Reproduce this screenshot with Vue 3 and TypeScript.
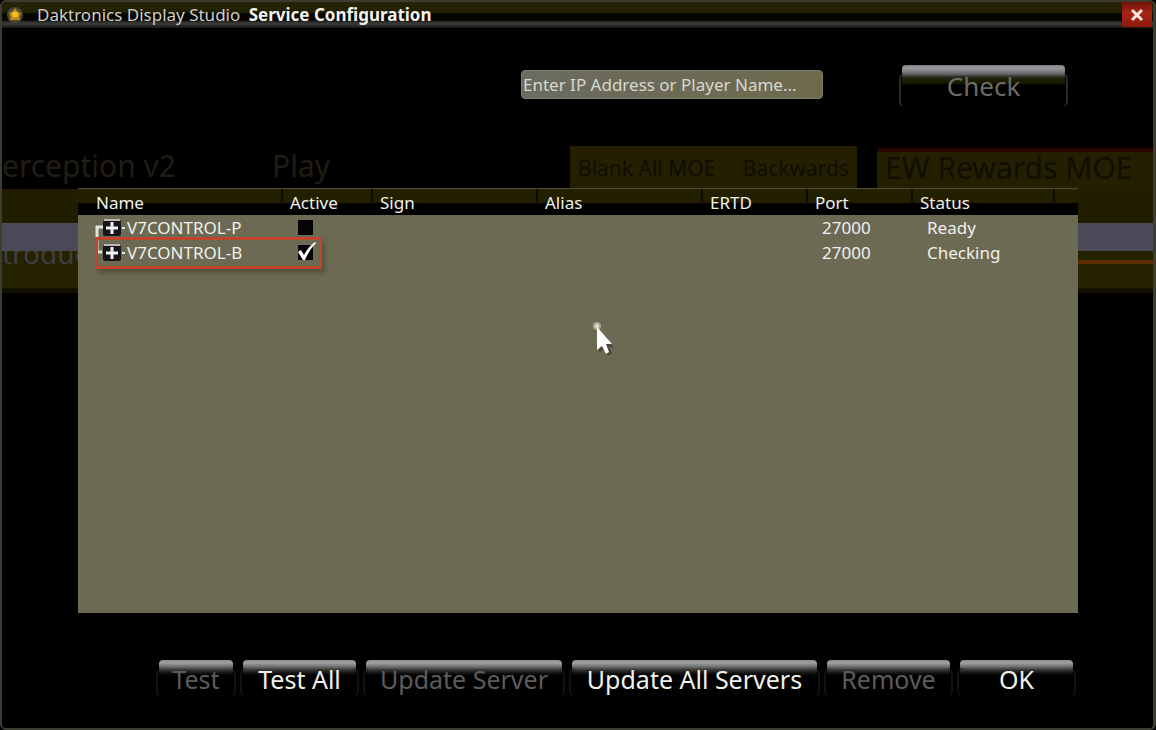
<script setup lang="ts">
import { ref } from 'vue'

interface Server {
  name: string
  active: boolean
  sign: string
  alias: string
  ertd: string
  port: number
  status: string
}

interface Action {
  label: string
  enabled: boolean
  size: string
}

const address = ref('')

const columns = ['Name', 'Active', 'Sign', 'Alias', 'ERTD', 'Port', 'Status', '']

const servers = ref<Server[]>([
  { name: 'V7CONTROL-P', active: false, sign: '', alias: '', ertd: '', port: 27000, status: 'Ready' },
  { name: 'V7CONTROL-B', active: true, sign: '', alias: '', ertd: '', port: 27000, status: 'Checking' },
])

const actions: Action[] = [
  { label: 'Test', enabled: false, size: 'xs' },
  { label: 'Test All', enabled: true, size: 'sm' },
  { label: 'Update Server', enabled: false, size: 'lg' },
  { label: 'Update All Servers', enabled: true, size: 'xl' },
  { label: 'Remove', enabled: false, size: 'md' },
  { label: 'OK', enabled: true, size: 'sm' },
]
</script>

<template>
  <main class="window">
    <div class="backdrop" aria-hidden="true">
      <span class="ghost ghost-title">erception v2</span>
      <span class="ghost ghost-play">Play</span>
      <span class="tab tab-blank"><span>Blank All MOE</span><span>Backwards</span></span>
      <span class="tab tab-rewards">EW Rewards MOE</span>
      <div class="band">
        <div class="band-top"></div>
        <div class="band-mid"></div>
        <div class="band-low"><span>troduc</span></div>
      </div>
      <i class="edge edge-a"></i>
      <i class="edge edge-b"></i>
      <i class="edge edge-c"></i>
    </div>

    <header class="titlebar">
      <svg class="logo" viewBox="0 0 18 18" aria-hidden="true">
        <circle cx="9" cy="9" r="8" fill="#4a4638" />
        <path d="M9 2 11.5 5.5 15 7 13.5 10.5 14 14H4L4.5 10.5 3 7 6.500 5.500Z" fill="#b98a10" />
        <circle cx="9" cy="8.500" r="3" fill="#f5bd28" />
      </svg>
      <h1><span>Daktronics Display Studio</span> <b>Service Configuration</b></h1>
      <button class="close" type="button" aria-label="Close">
        <svg viewBox="0 0 14 14"><path d="M2 2 12 12M12 2 2 12" stroke="#ffe9dc" stroke-width="3" /></svg>
      </button>
    </header>

    <form class="lookup" @submit.prevent>
      <input v-model="address" type="text" aria-label="IP address or player name" placeholder="Enter IP Address or Player Name..." />
      <button class="glass check" type="submit" disabled>Check</button>
    </form>

    <section class="panel">
      <table>
        <colgroup>
          <col class="c-name" /><col class="c-active" /><col class="c-wide" /><col class="c-wide" />
          <col class="c-mid" /><col class="c-mid" /><col class="c-status" /><col />
        </colgroup>
        <thead>
          <tr><th v-for="(c, i) in columns" :key="i" scope="col">{{ c }}</th></tr>
        </thead>
        <tbody>
          <tr v-for="(s, i) in servers" :key="s.name">
            <td>
              <div class="node">
                <svg class="tree" viewBox="0 0 33 25" aria-hidden="true">
                  <path v-if="i === 0" d="M9 12H3V25" fill="none" stroke="#e4e4e0" stroke-width="3" />
                  <path v-else d="M3 0V12H8" fill="none" stroke="#e4e4e0" stroke-width="3" />
                  <rect x="9" y="5" width="18" height="16" rx="2" fill="#17171a" />
                  <path d="M10 5H26" stroke="#b9b9b9" stroke-width="2" />
                  <path d="M12 13H24M18 7V19" stroke="#f2f2f2" stroke-width="3" />
                  <path d="M28 13H31" stroke="#e4e4e0" stroke-width="2" />
                </svg>
                <span>{{ s.name }}</span>
              </div>
            </td>
            <td>
              <label class="tick">
                <input v-model="s.active" type="checkbox" :aria-label="`${s.name} active`" />
                <svg v-if="s.active" viewBox="0 0 20 20" aria-hidden="true">
                  <path d="M1 10 4 8 7 13Q11 5 18 0L19 1Q12 8 8 18H6Z" fill="#fff" />
                </svg>
              </label>
            </td>
            <td>{{ s.sign }}</td>
            <td>{{ s.alias }}</td>
            <td>{{ s.ertd }}</td>
            <td class="inset">{{ s.port }}</td>
            <td class="inset">{{ s.status }}</td>
            <td></td>
          </tr>
        </tbody>
      </table>
      <div class="marker"></div>
      <svg class="pointer" viewBox="0 0 24 34" aria-hidden="true">
        <path d="M7 8V31L12 27 16 34 20 31 17 25H22Z" fill="#35332a" opacity=".6" />
        <circle cx="5" cy="4" r="4" fill="#aaa995" />
        <circle cx="5" cy="4" r="2" fill="#dddccf" />
        <path d="M5 5V28L10 24 14 32 17 30 14 22H20Z" fill="#fff" />
      </svg>
    </section>

    <footer class="actions">
      <button v-for="a in actions" :key="a.label" type="button" class="glass" :class="a.size" :disabled="!a.enabled">
        {{ a.label }}
      </button>
    </footer>
  </main>
</template>

<style>
body {
  margin: 0;
  background: #000;
}
</style>

<style scoped>
.window {
  position: relative;
  isolation: isolate;
  box-sizing: border-box;
  display: flex;
  flex-direction: column;
  min-height: 100vh;
  overflow: hidden;
  border: 2px solid #3d3c30;
  border-right-width: 3px;
  border-radius: 6px;
  background: #000;
  color: #f0f0ec;
  font-family: "Noto Sans", "Open Sans", sans-serif;
  font-size: 17px;
}

.backdrop {
  position: absolute;
  inset: 0;
  z-index: -1;
}
.ghost,
.tab,
.edge {
  position: absolute;
  white-space: nowrap;
}
.ghost {
  top: 144px;
  font-size: 30px;
  line-height: 40px;
  color: #201d14;
}
.ghost-title { left: 0; }
.ghost-play { left: 270px; }
.tab {
  box-sizing: border-box;
  color: #100e00;
  background: #231f00;
}
.tab-blank {
  top: 144px;
  left: 568px;
  width: 287px;
  height: 44px;
  padding: 0 8px;
  display: flex;
  justify-content: space-between;
  font-size: 21px;
  line-height: 44px;
}
.tab-rewards {
  top: 146px;
  left: 875px;
  right: 0;
  height: 44px;
  padding-left: 8px;
  border-top: 4px solid #2a0500;
  font-size: 30px;
  line-height: 32px;
}
.band {
  position: absolute;
  top: 187px;
  left: 0;
  right: 0;
}
.band-top { height: 34px; background: #211d00; }
.band-mid { height: 28px; background: #4b4858; }
.band-low {
  height: 37px;
  overflow: hidden;
  background: linear-gradient(90deg, transparent 50%, #5c2b00 50%) 0 9px / 100% 4px no-repeat, #252200;
  border-bottom: 5px solid #131100;
  font-size: 28px;
  line-height: 4px;
  color: #403d42;
}
.edge {
  right: -3px;
  width: 3px;
  background: #a88c00;
}
.edge-a { top: 55px; height: 54px; }
.edge-b { top: 139px; height: 54px; }
.edge-c { top: 222px; height: 56px; }

.titlebar {
  display: flex;
  align-items: center;
  height: 26px;
  box-sizing: border-box;
  padding-left: 4px;
  border-bottom: 1px solid #1a1a18;
  background: linear-gradient(#26240a 0, #232000 10px, #050500 12px, #050505 18px, #2e2e2c 20px, #3a3a37 22px, #141413 26px);
}
.logo {
  width: 18px;
  height: 18px;
  margin-right: 13px;
}
h1 {
  flex: 1;
  margin: 0;
  font-size: 17px;
  line-height: 26px;
  font-weight: 400;
  color: #cfcfc8;
  white-space: nowrap;
}
h1 b {
  margin-left: 4px;
  color: #f2f2ec;
}
.close {
  display: grid;
  place-items: center;
  width: 30px;
  height: 25px;
  padding: 0;
  border: 0;
  margin-right: 1px;
  background: linear-gradient(#6e1408, #a82414 45%, #8c170a);
}
.close svg {
  width: 14px;
  height: 14px;
}

.lookup {
  display: flex;
  justify-content: flex-end;
  align-items: flex-start;
  padding: 37px 88px 0 0;
  height: 123px;
}
.lookup input {
  box-sizing: border-box;
  width: 302px;
  height: 29px;
  margin: 5px 79px 0 0;
  padding: 0 1px;
  border: 1px solid #80806f;
  border-radius: 4px;
  background: linear-gradient(90deg, #6b6b60, #6d6a4c);
  color: #e2e2da;
  font: inherit;
  font-size: 17px;
}
.lookup input::placeholder {
  color: #d8d8d0;
  opacity: 1;
}

.glass {
  position: relative;
  box-sizing: border-box;
  border: 0;
  padding: 0;
  border-radius: 4px;
  background: linear-gradient(#8f8f8f, #a0a0a0 3px, #6a6a6a 7px, #333330 10px, #0a0a08 14px, #000 16px);
  color: #f0f0ec;
  font: inherit;
  font-size: 25px;
  line-height: 38px;
  white-space: nowrap;
}
.glass::before {
  content: "";
  position: absolute;
  inset: 8px -3px 0;
  border: solid #111;
  border-width: 0 2px;
  border-radius: 6px;
}
.glass:disabled { color: #5c5c5c; }
.check {
  width: 163px;
  height: 42px;
  line-height: 42px;
  font-size: 26px;
  background: linear-gradient(#7c7c80, #9a9a9e 3px, #66666a 9px, #2a2a20 12px, #1c1c00 15px, #1a1a00 18px, #000 20px);
}
.check::before { border-color: #2a2a2a; }
.check:disabled { color: #6c6c66; }

.panel {
  position: relative;
  flex: 1;
  margin: 0 75px 0 76px;
  background: #6d6a53;
}
.panel::before {
  content: "";
  position: absolute;
  inset: 0 0 auto;
  height: 1px;
  background: #4a4930;
}
table {
  width: 100%;
  table-layout: fixed;
  border-collapse: collapse;
}
.c-name { width: 203px; }
.c-active { width: 90px; }
.c-wide { width: 165px; }
.c-mid { width: 105px; }
.c-status { width: 142px; }
thead tr {
  background: linear-gradient(#38361c 0, #232000 2px, #232000 14px, #000 16px);
}
th {
  height: 27px;
  padding: 2px 0 0 9px;
  box-sizing: border-box;
  font-weight: 400;
  font-size: 17px;
  line-height: 24px;
  text-align: left;
}
th:first-child { padding-left: 18px; }
th + th {
  background: linear-gradient(#0c0b00, #0c0b00) 0 0 / 2px 14px no-repeat;
}
td {
  height: 25px;
  padding: 0 0 0 9px;
  line-height: 25px;
}
td:first-child { padding-left: 16px; }
td.inset { padding-left: 16px; }
.node {
  display: flex;
  align-items: center;
}
.tree {
  width: 33px;
  height: 25px;
}
.tick {
  position: relative;
  display: flex;
  align-items: center;
  height: 25px;
  padding-left: 8px;
}
.tick input {
  appearance: none;
  width: 15px;
  height: 15px;
  margin: 0;
  background: #050505;
}
.tick svg {
  position: absolute;
  left: 7px;
  top: 2px;
  width: 20px;
  height: 20px;
}
.marker {
  position: absolute;
  top: 49px;
  left: 17px;
  width: 221px;
  height: 26px;
  border: 3px solid #c0452f;
  box-shadow: 3px 4px 4px #45443699;
  pointer-events: none;
}
.pointer {
  position: absolute;
  top: 134px;
  left: 514px;
  width: 24px;
  height: 34px;
}

.actions {
  display: flex;
  gap: 10px;
  justify-content: flex-end;
  padding: 47px 80px 31px 0;
}
.actions .glass { height: 37px; }
.xs { width: 74px; }
.sm { width: 113px; }
.md { width: 123px; }
.lg { width: 196px; }
.xl { width: 245px; }
</style>
